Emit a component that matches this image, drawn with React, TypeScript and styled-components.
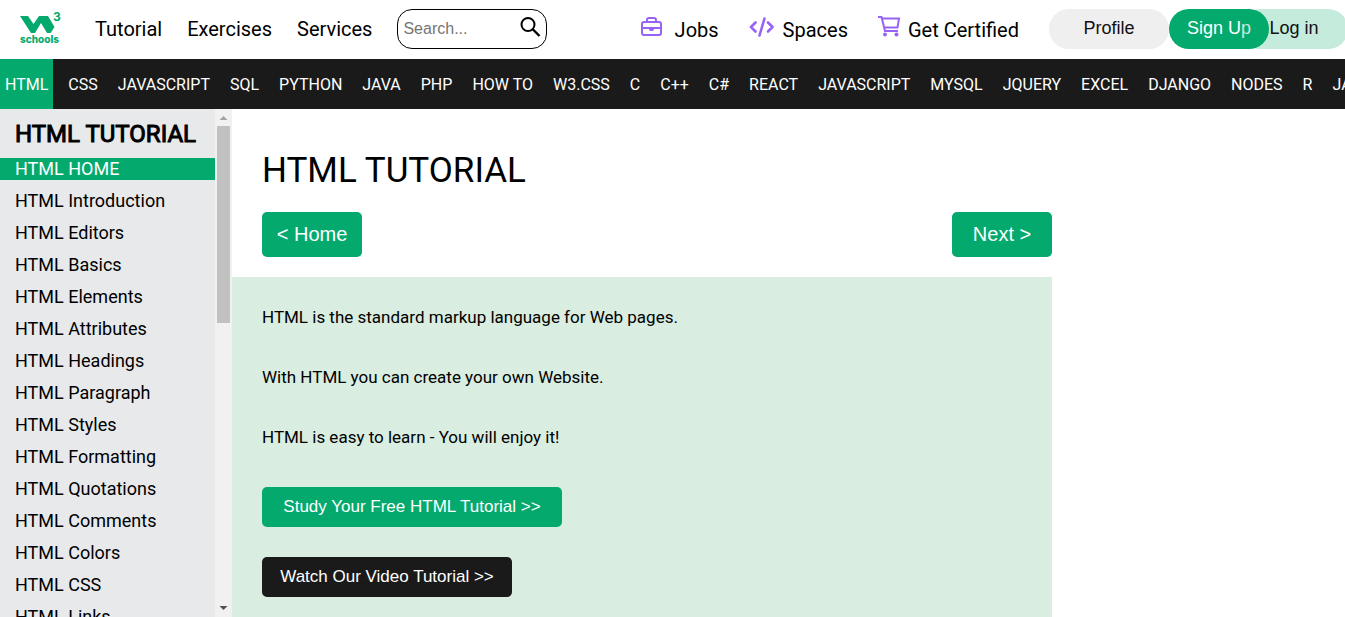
import React from "react";
import styled, { createGlobalStyle } from "styled-components";

const Global = createGlobalStyle`
  * { box-sizing: border-box; }
  body { margin: 0; background: #fff; color: #000; font-family: Roboto, sans-serif; }
  a { color: inherit; text-decoration: none; }
  button { border: 0; margin: 0; padding: 0; cursor: pointer; font-family: "Liberation Sans", Arial, sans-serif; }
  h1, h2, p, ul { margin: 0; padding: 0; font-weight: 400; }
  ul { list-style: none; }
`;

const Page = styled.div`
  display: flex;
  flex-direction: column;
  height: 100vh;
  overflow: hidden;
`;

const Header = styled.header`
  display: flex;
  align-items: center;
  flex: none;
  height: 59px;
  padding: 0 0 2px 20px;
  font-size: 20px;
`;

const LogoLink = styled.a`
  display: block;
  width: 41px;
  height: 32px;
  margin-right: 34px;
  svg { display: block; overflow: visible; }
`;

const MainLinks = styled.nav`
  display: flex;
  gap: 25px;
  margin-right: 25px;
`;

const SearchBox = styled.form`
  display: flex;
  align-items: center;
  width: 150px;
  height: 40px;
  padding: 0 5px;
  border: 1px solid #000;
  border-radius: 15px;
  input {
    flex: 1;
    min-width: 0;
    padding: 0;
    border: 0;
    outline: 0;
    background: none;
    font: 16px "Liberation Sans", Arial, sans-serif;
  }
  input::placeholder { color: #757575; }
  button { display: flex; background: none; margin-bottom: 4px; }
`;

const IconLinks = styled.nav`
  display: flex;
  gap: 30px;
  margin-left: auto;
  padding-top: 2px;
  a { display: flex; align-items: center; }
  svg { margin-bottom: 6px; }
`;

const IconLink = styled.a<{ $gap: number }>`
  gap: ${(p) => p.$gap}px;
`;

const Account = styled.div`
  display: flex;
  margin-left: 30px;
`;

const Pill = styled.button<{ $tone: "plain" | "green" | "mint" }>`
  flex: none;
  width: ${(p) => (p.$tone === "plain" ? 120 : p.$tone === "green" ? 100 : 108)}px;
  height: 40px;
  border-radius: 20px;
  font-size: 18px;
  color: ${(p) => (p.$tone === "green" ? "#fff" : "#111")};
  background: ${(p) =>
    p.$tone === "plain" ? "#efefef" : p.$tone === "green" ? "#04aa6d" : "rgba(4, 170, 109, 0.23)"};
  margin: ${(p) => (p.$tone === "mint" ? "0 -3px 0 -29px" : "0")};
`;

const Topics = styled.nav`
  display: flex;
  flex: none;
  gap: 10px;
  height: 50px;
  overflow: hidden;
  background: #1a1a1a;
  color: #fff;
  font-size: 16px;
`;

const Topic = styled.a<{ $active?: boolean }>`
  display: flex;
  align-items: center;
  padding: 0 5px;
  white-space: nowrap;
  background: ${(p) => (p.$active ? "#04aa6d" : "transparent")};
`;

const Body = styled.div`
  display: flex;
  flex: 1;
  min-height: 0;
`;

const Sidebar = styled.aside`
  flex: none;
  width: 215px;
  overflow: hidden;
  background: #e7e9eb;
  font-size: 18px;
  line-height: 22px;
  h2 {
    padding: 11px 0 9px 15px;
    font-size: 24px;
    line-height: 29px;
    -webkit-text-stroke: 1px #000;
  }
  ul { display: flex; flex-direction: column; gap: 10px; }
`;

const Lesson = styled.a<{ $active?: boolean }>`
  display: block;
  padding-left: 15px;
  color: ${(p) => (p.$active ? "#fff" : "#000")};
  background: ${(p) => (p.$active ? "#04aa6d" : "transparent")};
`;

const Scrollbar = styled.div`
  display: flex;
  flex-direction: column;
  justify-content: space-between;
  align-items: center;
  flex: none;
  width: 17px;
  background: #f1f1f1;
`;

const Thumb = styled.div`
  width: 13px;
  height: 197px;
  margin-bottom: auto;
  background: #c1c1c1;
`;

const Article = styled.main`
  display: flex;
  flex-direction: column;
  flex: 1;
  max-width: 820px;
`;

const Intro = styled.section`
  padding: 41px 0 20px 30px;
  h1 { font-size: 35px; line-height: 42px; margin-bottom: 20px; }
`;

const Pager = styled.div`
  display: flex;
  justify-content: space-between;
`;

const PageButton = styled.button`
  width: 100px;
  height: 45px;
  border-radius: 5px;
  background: #04aa6d;
  color: #fff;
  font-size: 20px;
`;

const Panel = styled.section`
  display: flex;
  flex-direction: column;
  align-items: flex-start;
  flex: 1;
  gap: 30px;
  padding: 30px;
  background: #d9ede1;
  font-size: 17px;
  p { line-height: 20px; margin-bottom: 10px; }
`;

const Action = styled.button<{ $dark?: boolean }>`
  flex: none;
  width: ${(p) => (p.$dark ? 250 : 300)}px;
  height: 40px;
  border-radius: 5px;
  background: ${(p) => (p.$dark ? "#1a1a1a" : "#04aa6d")};
  color: #fff;
  font-size: 17px;
`;

const Logo = () => (
  <svg width="41" height="32" viewBox="0 0 41 32" role="img" aria-label="W3 Schools">
    <path d="M0 3h8l5.500 8L19 3h9l6.500 11-4 6H27l-6-10-6 10h-4z" fill="#04aa6d" />
    <text x="33" y="8" fontFamily="Inter, sans-serif" fontSize="12" fontWeight="700" fill="#04aa6d">3</text>
    <text x="0" y="30" fontFamily="Inter, sans-serif" fontSize="10" fontWeight="800" fill="#04aa6d">schools</text>
  </svg>
);

const Briefcase = () => (
  <svg width="22" height="20" viewBox="0 0 22 20" fill="none" stroke="#9763f6" strokeWidth="2">
    <rect x="1" y="5" width="19" height="13" rx="2" />
    <path d="M6 5V3a2 2 0 0 1 2-2h5a2 2 0 0 1 2 2v2M1 11h19" />
    <path d="M8 11h5v1a2 2 0 0 1-2 2h-1a2 2 0 0 1-2-2z" fill="#9763f6" stroke="none" />
  </svg>
);

const Code = () => (
  <svg width="26" height="20" viewBox="0 0 26 20" fill="none" stroke="#9763f6" strokeWidth="2.6" strokeLinecap="round" strokeLinejoin="round">
    <path d="M6.500 5.500L2 10l4.500 4.500M19 5.500l4.500 4.500-4.500 4.500M15.500 1.500l-5 17" />
  </svg>
);

const Cart = () => (
  <svg width="23" height="21" viewBox="0 0 23 21" fill="none" stroke="#9763f6" strokeWidth="2">
    <path d="M0 1h3.500L7 15h13M4 2.500h17L19.500 11.500H6" />
    <circle cx="7" cy="18.500" r="2" fill="#9763f6" stroke="none" />
    <circle cx="18.500" cy="18.500" r="2" fill="#9763f6" stroke="none" />
  </svg>
);

const SearchIcon = () => (
  <svg width="21" height="20" viewBox="0 0 21 20" fill="none" stroke="#000" strokeWidth="2">
    <circle cx="8" cy="7.500" r="6.500" />
    <path d="M12.500 12l7 7" strokeWidth="2.400" />
  </svg>
);

const Arrow = ({ down = false }: { down?: boolean }) => (
  <svg width="17" height="17" viewBox="0 0 17 17" aria-hidden="true">
    <path d={down ? "M4.500 6h8l-4 4z" : "M4.500 11h8l-4-4z"} fill={down ? "#505050" : "#a3a3a3"} />
  </svg>
);

const topics = [
  "HTML", "CSS", "JAVASCRIPT", "SQL", "PYTHON", "JAVA", "PHP", "HOW TO", "W3.CSS", "C", "C++", "C#", "REACT",
  "JAVASCRIPT", "MYSQL", "JQUERY", "EXCEL", "DJANGO", "NODES", "R", "JAVA",
];

const lessons = [
  "HOME", "Introduction", "Editors", "Basics", "Elements", "Attributes", "Headings", "Paragraph", "Styles",
  "Formatting", "Quotations", "Comments", "Colors", "CSS", "Links",
];

export default function App() {
  return (
    <Page>
      <Global />
      <Header>
        <LogoLink href="#"><Logo /></LogoLink>
        <MainLinks>
          <a href="#">Tutorial</a>
          <a href="#">Exercises</a>
          <a href="#">Services</a>
        </MainLinks>
        <SearchBox>
          <input type="text" placeholder="Search..." aria-label="Search" />
          <button type="button" aria-label="Search"><SearchIcon /></button>
        </SearchBox>
        <IconLinks>
          <IconLink href="#" $gap={12}><Briefcase />Jobs</IconLink>
          <IconLink href="#" $gap={8}><Code />Spaces</IconLink>
          <IconLink href="#" $gap={7}><Cart />Get Certified</IconLink>
        </IconLinks>
        <Account>
          <Pill $tone="plain">Profile</Pill>
          <Pill $tone="green">Sign Up</Pill>
          <Pill $tone="mint">Log in</Pill>
        </Account>
      </Header>
      <Topics>
        {topics.map((name, i) => (
          <Topic key={i} href="#" $active={i === 0}>{name}</Topic>
        ))}
      </Topics>
      <Body>
        <Sidebar>
          <h2>HTML TUTORIAL</h2>
          <ul>
            {lessons.map((name, i) => (
              <li key={name}><Lesson href="#" $active={i === 0}>HTML {name}</Lesson></li>
            ))}
          </ul>
        </Sidebar>
        <Scrollbar>
          <Arrow />
          <Thumb />
          <Arrow down />
        </Scrollbar>
        <Article>
          <Intro>
            <h1>HTML TUTORIAL</h1>
            <Pager>
              <PageButton>&lt; Home</PageButton>
              <PageButton>Next &gt;</PageButton>
            </Pager>
          </Intro>
          <Panel>
            <p>HTML is the standard markup language for Web pages.</p>
            <p>With HTML you can create your own Website.</p>
            <p>HTML is easy to learn - You will enjoy it!</p>
            <Action>Study Your Free HTML Tutorial &gt;&gt;</Action>
            <Action $dark>Watch Our Video Tutorial &gt;&gt;</Action>
          </Panel>
        </Article>
      </Body>
    </Page>
  );
}
